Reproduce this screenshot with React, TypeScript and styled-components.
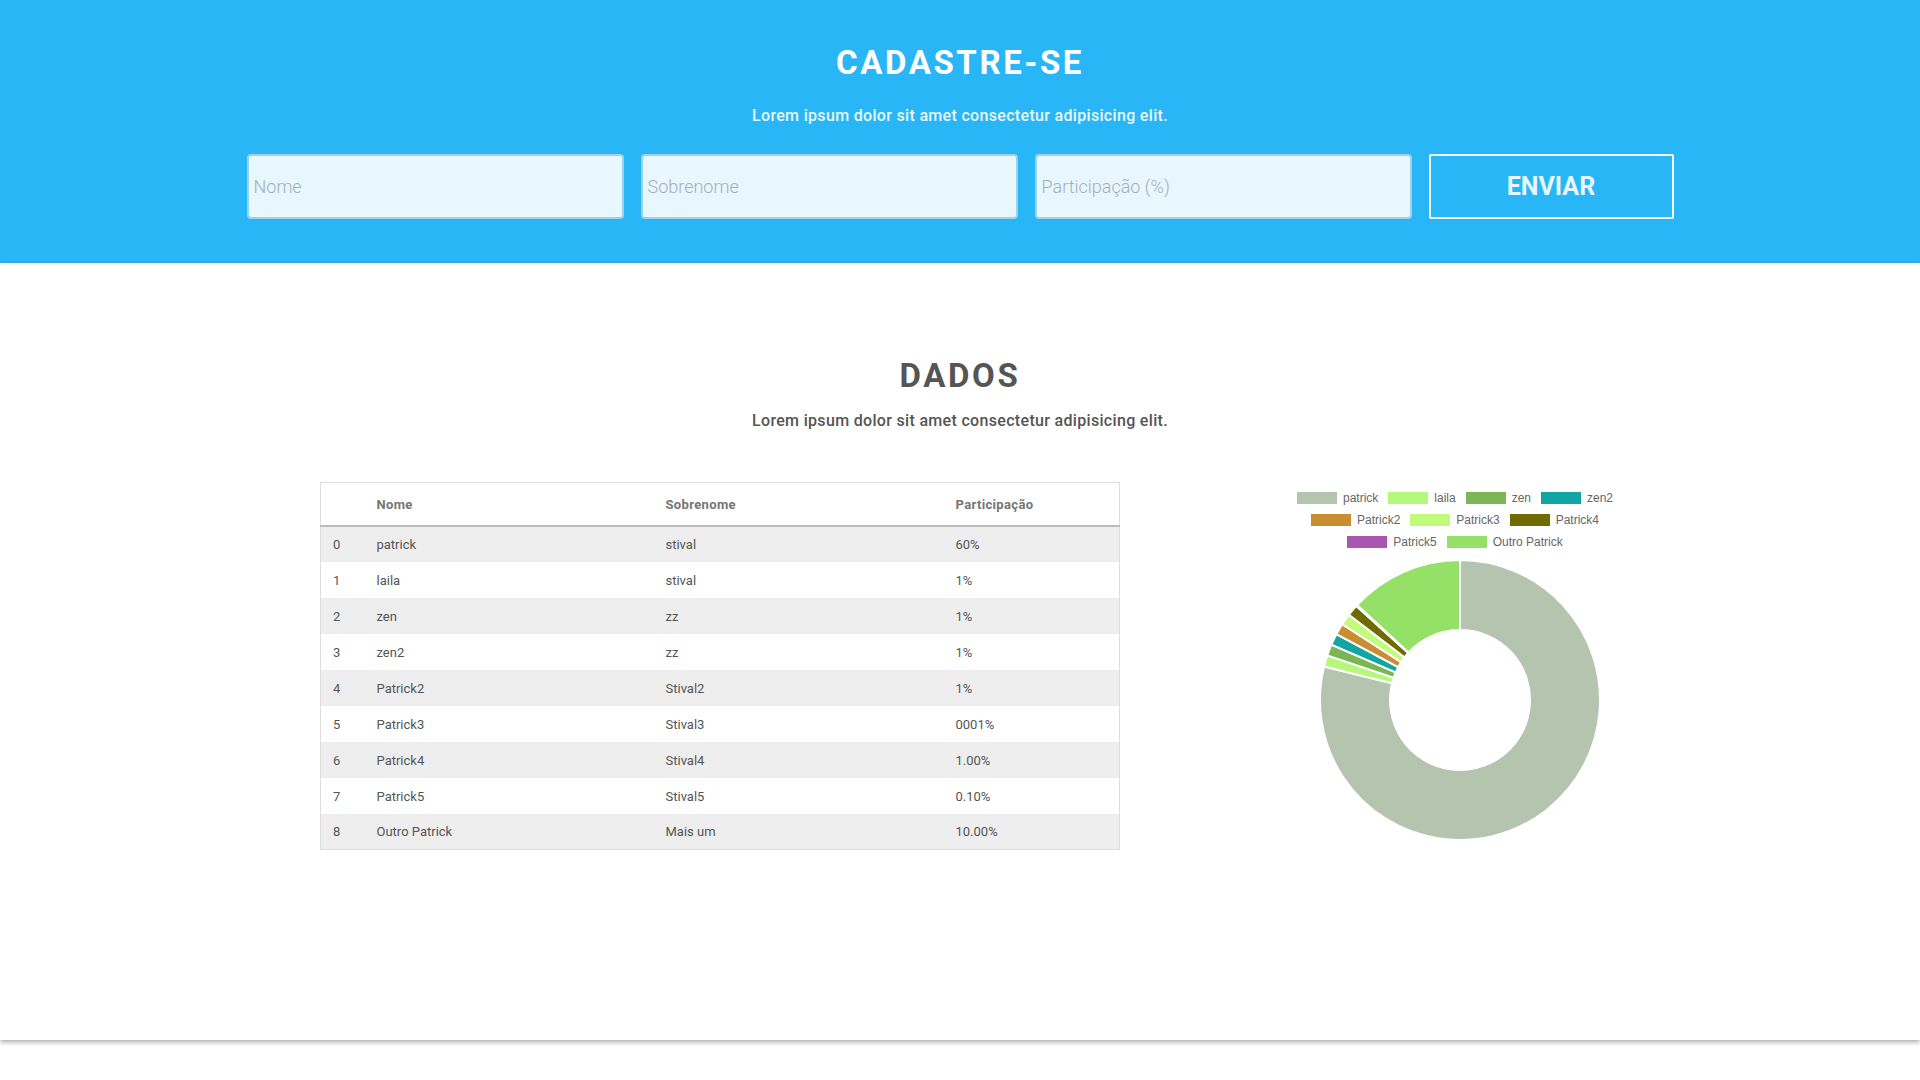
import React from 'react'
import styled, { createGlobalStyle } from 'styled-components'

const GlobalStyle = createGlobalStyle`
  * {
    box-sizing: border-box;
  }
  body {
    margin: 0;
    background: #fff;
    font-family: Roboto, 'Noto Sans', sans-serif;
  }
`

const Colors = {
  blue: '#29b6f6',
  paleBlue: '#e8f6fe',
  grey: '#555555',
}

const people = [
  { nome: 'patrick', sobrenome: 'stival', participacao: '60%', value: 60, color: '#b5c4af' },
  { nome: 'laila', sobrenome: 'stival', participacao: '1%', value: 1, color: '#b4f97b' },
  { nome: 'zen', sobrenome: 'zz', participacao: '1%', value: 1, color: '#7ab654' },
  { nome: 'zen2', sobrenome: 'zz', participacao: '1%', value: 1, color: '#13a4a4' },
  { nome: 'Patrick2', sobrenome: 'Stival2', participacao: '1%', value: 1, color: '#c98e31' },
  { nome: 'Patrick3', sobrenome: 'Stival3', participacao: '0001%', value: 1, color: '#c1fb7b' },
  { nome: 'Patrick4', sobrenome: 'Stival4', participacao: '1.00%', value: 1, color: '#6e6b00' },
  { nome: 'Patrick5', sobrenome: 'Stival5', participacao: '0.10%', value: 0.1, color: '#a956b0' },
  { nome: 'Outro Patrick', sobrenome: 'Mais um', participacao: '10.00%', value: 10, color: '#95e067' },
]

const Header = styled.header`
  background-color: ${Colors.blue};
  height: 263px;
  padding-top: 43px;
  text-align: center;
`

const Title = styled.h1<{ $color: string }>`
  margin: 0;
  font-size: 33px;
  line-height: 40px;
  font-weight: 700;
  letter-spacing: 2.6px;
  color: ${(p) => p.$color};
`

const Subtitle = styled.p<{ $color: string; $top: number }>`
  margin: ${(p) => p.$top}px 0 0;
  font-size: 16px;
  line-height: 20px;
  font-weight: 500;
  letter-spacing: 0.32px;
  color: ${(p) => p.$color};
`

const Form = styled.form`
  display: flex;
  justify-content: center;
  gap: 17px;
  margin-top: 28px;
`

const Input = styled.input`
  width: 377px;
  height: 65px;
  padding: 0 5px;
  border: 2px solid #9fd2e6;
  border-radius: 4px;
  background-color: ${Colors.paleBlue};
  font-family: Roboto, sans-serif;
  font-size: 18px;
  font-weight: 300;
  color: #555;
  outline: none;

  &::placeholder {
    color: #a6b0b5;
  }
`

const SendButton = styled.button`
  width: 245px;
  height: 65px;
  border: 2px solid #f4fbff;
  border-radius: 2px;
  background: transparent;
  font-family: Roboto, sans-serif;
  font-size: 25px;
  font-weight: 700;
  color: ${Colors.paleBlue};
  cursor: pointer;
`

const DataSection = styled.section`
  position: relative;
  z-index: 1;
  height: 777px;
  padding-top: 93px;
  text-align: center;
  background: #fff;
  box-shadow: 0 2px 5px rgba(0, 0, 0, 0.35);
`

const DataRow = styled.div`
  display: grid;
  grid-template-columns: 800px 360px;
  column-gap: 160px;
  padding-left: 320px;
  margin-top: 51px;
  text-align: left;
`

const Table = styled.table`
  width: 800px;
  border-collapse: collapse;
  table-layout: fixed;
  border: 1px solid #dddddd;
  font-size: 13px;
`

const Th = styled.th`
  height: 43px;
  padding: 2px 12px 0;
  text-align: left;
  font-weight: 700;
  letter-spacing: 0.35px;
  color: #757575;
  border-bottom: 2px solid #bbbbbb;
`

const Tr = styled.tr<{ $striped: boolean }>`
  background-color: ${(p) => (p.$striped ? '#eeeeee' : '#ffffff')};
`

const Td = styled.td`
  height: 36px;
  padding: 1px 12px 0;
  color: #555;
`

const ChartBox = styled.div`
  display: flex;
  flex-direction: column;
  align-items: center;
  padding-top: 5px;
`

const Legend = styled.ul`
  display: flex;
  flex-wrap: wrap;
  justify-content: center;
  width: 360px;
  margin: 0;
  padding: 0;
  list-style: none;
`

const LegendItem = styled.li`
  display: flex;
  align-items: center;
  height: 22px;
  margin-right: 10px;
  font-family: 'Liberation Sans', Arial, sans-serif;
  font-size: 12px;
  color: #666666;
`

const Swatch = styled.span<{ $color: string }>`
  width: 40px;
  height: 12px;
  margin-right: 6px;
  background-color: ${(p) => p.$color};
`

const Donut = styled.svg`
  display: block;
  margin-top: 6px;
`

const Footer = styled.footer`
  height: 40px;
  background: #fff;
`

const slicePath = (cx: number, cy: number, R: number, r: number, a0: number, a1: number) => {
  const large = a1 - a0 > Math.PI ? 1 : 0
  const p = (rad: number, a: number) => `${cx + rad * Math.cos(a)} ${cy + rad * Math.sin(a)}`
  return `M ${p(R, a0)} A ${R} ${R} 0 ${large} 1 ${p(R, a1)} L ${p(r, a1)} A ${r} ${r} 0 ${large} 0 ${p(r, a0)} Z`
}

const DoughnutChart = () => {
  const total = people.reduce((s, d) => s + d.value, 0)
  let angle = -Math.PI / 2
  const size = 282
  const c = size / 2
  return (
    <ChartBox>
      <Legend>
        {people.map((d) => (
          <LegendItem key={d.nome}>
            <Swatch $color={d.color} />
            {d.nome}
          </LegendItem>
        ))}
      </Legend>
      <Donut width={size} height={size} viewBox={`0 0 ${size} ${size}`}>
        {people.map((d) => {
          const start = angle
          angle += (d.value / total) * Math.PI * 2
          return (
            <path
              key={d.nome}
              d={slicePath(c, c, 140, 70, start, angle)}
              fill={d.color}
              stroke="#fff"
              strokeWidth={2}
            />
          )
        })}
      </Donut>
    </ChartBox>
  )
}

const App = (): JSX.Element => (
  <>
    <GlobalStyle />
    <Header>
      <Title $color="#fff">CADASTRE-SE</Title>
      <Subtitle $color={Colors.paleBlue} $top={23}>
        Lorem ipsum dolor sit amet consectetur adipisicing elit.
      </Subtitle>
      <Form onSubmit={(e) => e.preventDefault()}>
        <Input placeholder="Nome" />
        <Input placeholder="Sobrenome" />
        <Input placeholder="Participação (%)" />
        <SendButton type="submit">ENVIAR</SendButton>
      </Form>
    </Header>

    <DataSection>
      <Title $color={Colors.grey}>DADOS</Title>
      <Subtitle $color={Colors.grey} $top={15}>
        Lorem ipsum dolor sit amet consectetur adipisicing elit.
      </Subtitle>
      <DataRow>
        <Table>
          <colgroup>
            <col style={{ width: 44 }} />
            <col style={{ width: 289 }} />
            <col style={{ width: 290 }} />
            <col />
          </colgroup>
          <thead>
            <tr>
              <Th />
              <Th>Nome</Th>
              <Th>Sobrenome</Th>
              <Th>Participação</Th>
            </tr>
          </thead>
          <tbody>
            {people.map((d, i) => (
              <Tr key={d.nome} $striped={i % 2 === 0}>
                <Td>{i}</Td>
                <Td>{d.nome}</Td>
                <Td>{d.sobrenome}</Td>
                <Td>{d.participacao}</Td>
              </Tr>
            ))}
          </tbody>
        </Table>
        <DoughnutChart />
      </DataRow>
    </DataSection>
    <Footer />
  </>
)

export default App
